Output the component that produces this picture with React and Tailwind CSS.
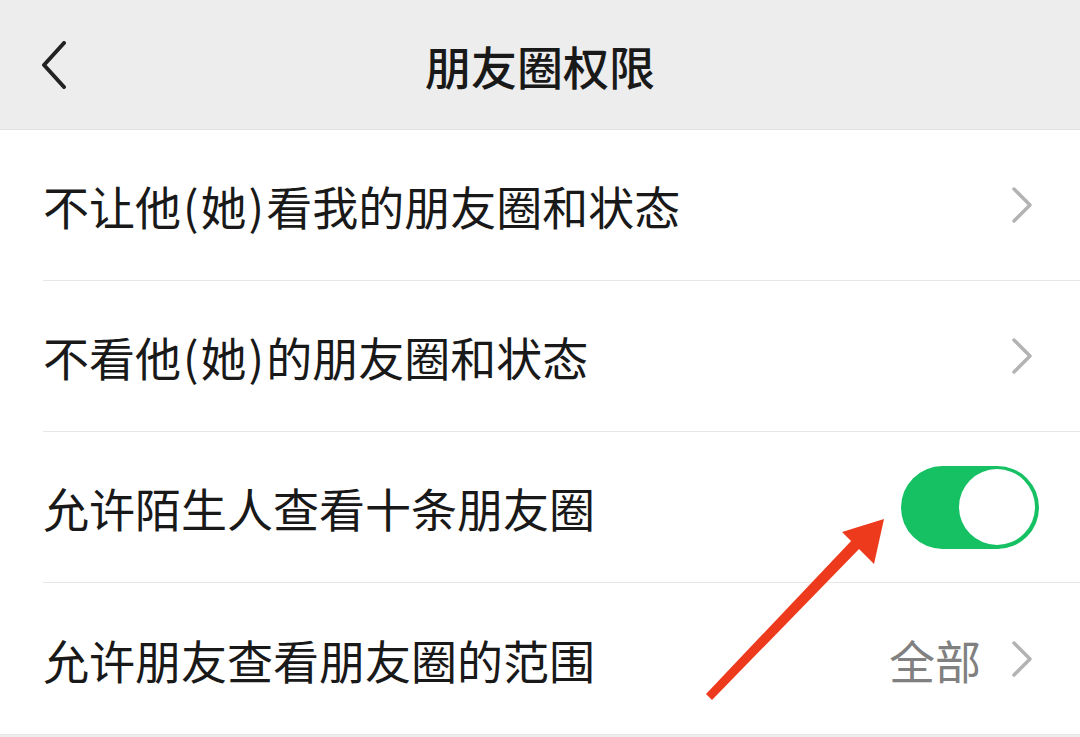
import React from 'react';

const font = { fontFamily: '"Noto Sans CJK SC", "Noto Sans", sans-serif' };

function Chevron() {
  return (
    <svg width="22" height="36" viewBox="0 0 22 36" className="shrink-0">
      <path d="M3 2 L19 18 L3 34" fill="none" stroke="#b3b3b3" strokeWidth="3.5" strokeLinecap="round" strokeLinejoin="round" />
    </svg>
  );
}

// parentheses in the reference sit a bit looser than the font's own
function P({ children }) {
  return <span className="mx-[2px]">{children}</span>;
}

function Row({ label, children, last }) {
  return (
    <div className="pl-[43px] bg-white">
      <div className={`h-[151px] flex items-center justify-between pr-[47px] ${last ? '' : 'border-b border-[#e6e6e6]'}`}>
        <span className="text-[46px] text-[#191919] leading-none">{label}</span>
        {children}
      </div>
    </div>
  );
}

export default function App() {
  return (
    <div className="relative w-[1080px] h-[737px] bg-[#ededed] overflow-hidden" style={font}>
      {/* Header */}
      <div className="h-[130px] flex items-center justify-center relative border-b border-[#e2e2e2]">
        <svg width="30" height="48" viewBox="0 0 30 48" className="absolute left-[39px] top-[41px]">
          <path d="M25 2 L5 24 L25 46" fill="none" stroke="#222" strokeWidth="4" strokeLinecap="round" strokeLinejoin="round" />
        </svg>
        <h1 className="text-[46px] font-medium text-[#191919] leading-none">朋友圈权限</h1>
      </div>

      {/* List */}
      <div className="bg-white">
        <Row label={<>不让他<P>(</P>她<P>)</P>看我的朋友圈和状态</>}>
          <Chevron />
        </Row>
        <Row label={<>不看他<P>(</P>她<P>)</P>的朋友圈和状态</>}>
          <Chevron />
        </Row>
        <Row label="允许陌生人查看十条朋友圈">
          <div className="w-[138px] h-[83px] rounded-full bg-[#16c163] flex items-center justify-end pr-[4px] -mr-[6px]">
            <div className="w-[76px] h-[76px] rounded-full bg-white" />
          </div>
        </Row>
        <Row label="允许朋友查看朋友圈的范围" last>
          <div className="flex items-center gap-[30px]">
            <span className="text-[46px] text-[#808080] leading-none">全部</span>
            <Chevron />
          </div>
        </Row>
      </div>
      <div className="border-t border-[#e6e6e6]" />

      {/* Red arrow annotation */}
      <svg className="absolute left-0 top-0 pointer-events-none" width="1080" height="737" viewBox="0 0 1080 737">
        <polygon points="706,694 712,700 861,547 853,539" fill="#ee3a1c" />
        <polygon points="884,519 842,532 874,564" fill="#ee3a1c" />
      </svg>
    </div>
  );
}
